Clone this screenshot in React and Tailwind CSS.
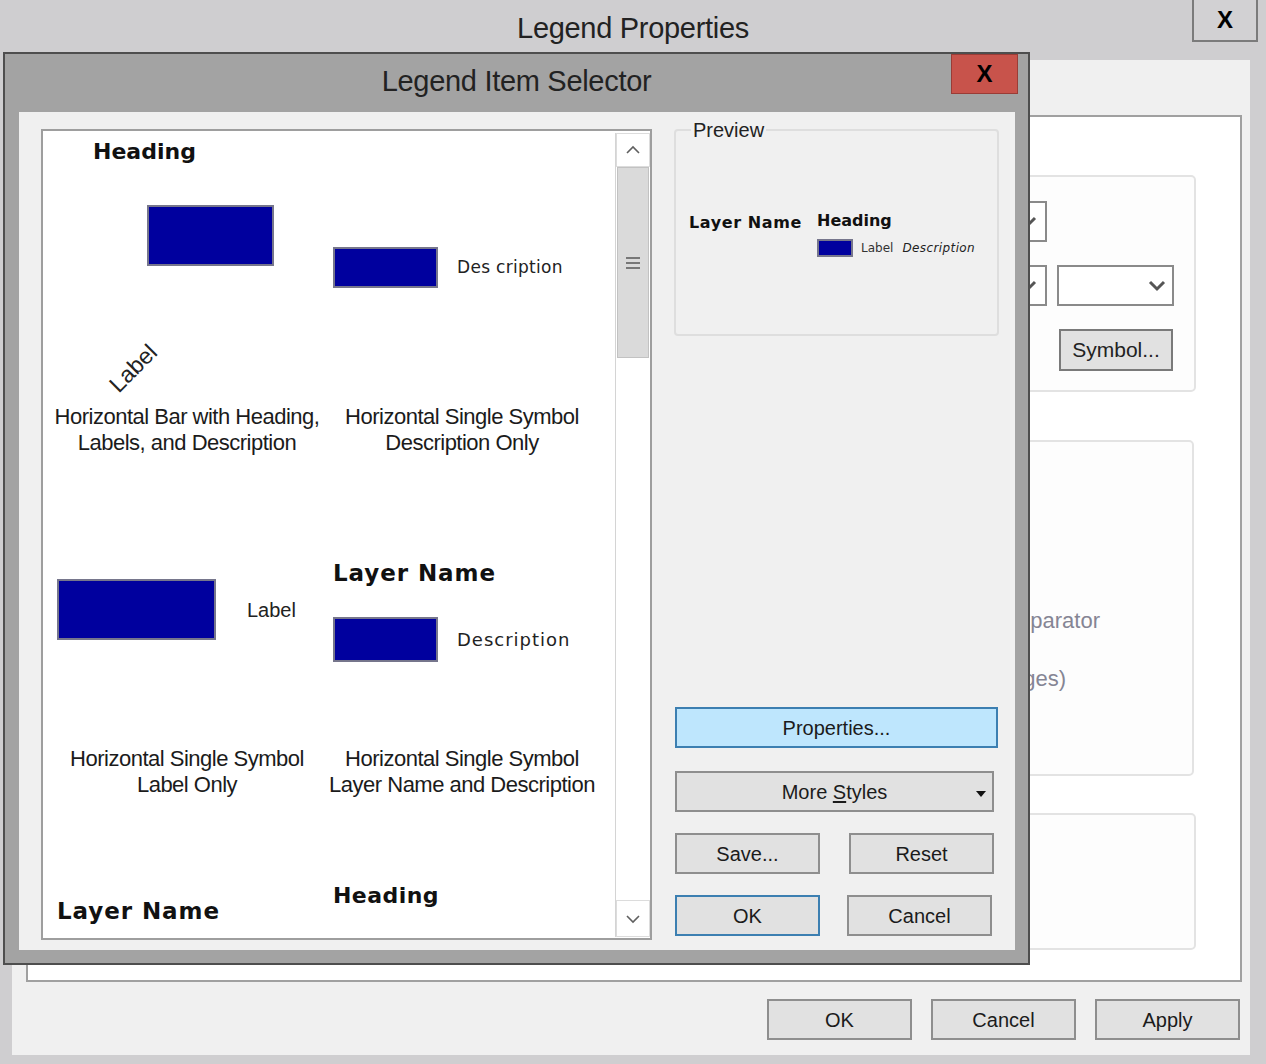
import React from "react";

const UI = "font-['Liberation_Sans',Arial,sans-serif]";
const BOLD = "font-['DejaVu_Sans',Verdana,sans-serif] font-bold";

function Btn({ children, className = "" }) {
  return (
    <div
      className={`flex items-center justify-center h-[41px] border-2 border-[#8e8e8e] bg-[#e1e1e1] text-[20px] text-[#1b1b1b] ${className}`}
    >
      {children}
    </div>
  );
}

function Swatch({ className = "" }) {
  return <div className={`bg-[#00009e] border-2 border-[#76768c] shrink-0 ${className}`} />;
}

function Chevron({ up = false }) {
  return (
    <svg width="16" height="10" viewBox="0 0 16 10">
      <polyline
        points={up ? "2,8 8,2 14,8" : "2,2 8,8 14,2"}
        fill="none"
        stroke="#606060"
        strokeWidth="1.6"
      />
    </svg>
  );
}

function ComboArrow() {
  return (
    <svg width="18" height="12" viewBox="0 0 18 12">
      <polyline points="2,2 9,9 16,2" fill="none" stroke="#555" strokeWidth="3" />
    </svg>
  );
}

function Caption({ lines }) {
  return (
    <div className={`${UI} flex flex-col items-center text-[22px] leading-[26px] tracking-[-0.5px] text-[#1b1b1b] whitespace-nowrap`}>
      {lines.map((l) => (
        <span key={l}>{l}</span>
      ))}
    </div>
  );
}

function ItemList() {
  return (
    <div className="w-[611px] h-[811px] border-2 border-[#9e9e9e] bg-white flex">
      <div className="w-[572px] overflow-hidden">
        {/* row 1 */}
        <div className="flex h-[342px]">
          <div className="w-[288px] flex flex-col">
            <div className="h-[273px] flex flex-col">
              <div className={`${BOLD} text-[22px] leading-[26px] mt-[8px] ml-[50px] text-[#111]`}>Heading</div>
              <Swatch className="w-[127px] h-[61px] mt-[40px] ml-[104px]" />
              <div className="w-[50px] h-[47px] mt-[79px] ml-[65px] flex items-center justify-center">
                <span className={`${UI} inline-block -rotate-45 text-[23px] text-[#222]`}>Label</span>
              </div>
            </div>
            <Caption lines={["Horizontal Bar with Heading,", "Labels, and Description"]} />
          </div>
          <div className="w-[262px] flex flex-col">
            <div className="h-[273px] flex flex-col">
              <div className="flex items-center gap-[19px] mt-[116px] ml-[2px]">
                <Swatch className="w-[105px] h-[41px]" />
                <span className="font-['DejaVu_Sans',sans-serif] text-[17px] tracking-[0.3px] text-[#222]">Des cription</span>
              </div>
            </div>
            <Caption lines={["Horizontal Single Symbol", "Description Only"]} />
          </div>
        </div>
        {/* row 2 */}
        <div className="flex h-[342px]">
          <div className="w-[288px] flex flex-col">
            <div className="h-[273px] flex flex-col">
              <div className="flex items-center gap-[31px] mt-[106px] ml-[14px]">
                <Swatch className="w-[159px] h-[61px]" />
                <span className={`${UI} text-[20px] text-[#222]`}>Label</span>
              </div>
            </div>
            <Caption lines={["Horizontal Single Symbol", "Label Only"]} />
          </div>
          <div className="w-[262px] flex flex-col">
            <div className="h-[273px] flex flex-col">
              <div className={`${BOLD} text-[23px] leading-[28px] tracking-[0.04em] mt-[86px] ml-[2px] text-[#111]`}>Layer Name</div>
              <div className="flex items-center gap-[19px] mt-[30px] ml-[2px]">
                <Swatch className="w-[105px] h-[45px]" />
                <span className="font-['DejaVu_Sans',sans-serif] text-[18px] tracking-[1px] text-[#222]">Description</span>
              </div>
            </div>
            <Caption lines={["Horizontal Single Symbol", "Layer Name and Description"]} />
          </div>
        </div>
        {/* row 3 */}
        <div className="flex">
          <div className="w-[288px] flex flex-col">
            <div className={`${BOLD} text-[23px] leading-[28px] tracking-[0.04em] mt-[82px] ml-[14px] text-[#111]`}>Layer Name</div>
          </div>
          <div className="w-[262px] flex flex-col">
            <div className={`${BOLD} text-[22px] leading-[28px] tracking-[0.02em] mt-[67px] ml-[2px] text-[#111]`}>Heading</div>
          </div>
        </div>
      </div>
      {/* scrollbar */}
      <div className="w-[35px] flex flex-col border-l border-[#d4d4d4] mt-[2px] mb-[1px]">
        <div className="h-[34px] flex items-center justify-center bg-white border border-[#dcdcdc]">
          <Chevron up />
        </div>
        <div className="h-[191px] mx-[1px] bg-[#dadada] border border-[#c2c2c2] flex items-center justify-center">
          <svg width="14" height="14" viewBox="0 0 14 14">
            <line x1="0" y1="2" x2="14" y2="2" stroke="#777" strokeWidth="2" />
            <line x1="0" y1="7" x2="14" y2="7" stroke="#777" strokeWidth="2" />
            <line x1="0" y1="12" x2="14" y2="12" stroke="#777" strokeWidth="2" />
          </svg>
        </div>
        <div className="flex-1 bg-white" />
        <div className="h-[37px] flex items-center justify-center bg-white border border-[#dcdcdc]">
          <Chevron />
        </div>
      </div>
    </div>
  );
}

function ItemSelector() {
  return (
    <div className="absolute left-[3px] top-[52px] w-[1027px] h-[913px] border-2 border-[#4e4e4e] bg-[#a3a3a3] flex flex-col">
      <div className="h-[58px] flex items-center justify-center relative">
        <span className={`${UI} text-[29px] text-[#222] tracking-[-0.3px] mt-[-2px]`}>Legend Item Selector</span>
        <div className="absolute top-0 right-[10px] w-[67px] h-[40px] bg-[#c8534b] border border-[#9a3c36] flex items-center justify-center">
          <span className={`${UI} font-bold text-[24px] leading-none text-black`}>X</span>
        </div>
      </div>
      <div className="ml-[14px] mr-[13px] h-[838px] bg-[#f0f0f0] flex pl-[22px] pt-[17px]">
        <ItemList />
        <div className="ml-[22px] w-[325px] flex flex-col">
          <fieldset className="h-[218px] -mt-[11px] border-2 border-[#dedede] rounded-[4px]">
            <legend className={`${UI} ml-[15px] px-[2px] text-[20px] leading-[24px] text-[#222]`}>Preview</legend>
            <div className="flex items-start pl-[13px] mt-[71px]">
              <div className={`${BOLD} w-[128px] text-[16px] leading-[20px] tracking-[0.6px] text-[#111]`}>Layer Name</div>
              <div className="flex flex-col">
                <div className={`${BOLD} text-[16px] leading-[20px] -mt-[2px] text-[#111]`}>Heading</div>
                <div className="flex items-center mt-[8px]">
                  <Swatch className="w-[36px] h-[18px]" />
                  <span className="font-['DejaVu_Sans',sans-serif] text-[12px] ml-[8px] text-[#333]">Label</span>
                  <span className="font-['DejaVu_Sans',sans-serif] italic text-[12px] ml-[9px] tracking-[0.4px] text-[#222]">Description</span>
                </div>
              </div>
            </div>
          </fieldset>
          <Btn className={`${UI} w-[323px] ml-[1px] mt-[371px] !bg-[#bee6fd] !border-[#3c7fb1]`}>Properties...</Btn>
          <Btn className={`${UI} w-[319px] ml-[1px] mt-[23px] relative`}>
            <span>
              More <span className="underline underline-offset-2">S</span>tyles
            </span>
            <svg className="absolute right-[6px] top-[18px]" width="10" height="6" viewBox="0 0 10 6">
              <polygon points="0,0 10,0 5,6" fill="#111" />
            </svg>
          </Btn>
          <div className="flex mt-[21px] ml-[1px] gap-[29px]">
            <Btn className={`${UI} w-[145px]`}>Save...</Btn>
            <Btn className={`${UI} w-[145px]`}>Reset</Btn>
          </div>
          <div className="flex mt-[21px] ml-[1px] gap-[27px]">
            <Btn className={`${UI} w-[145px] !border-[#3c7fb1]`}>OK</Btn>
            <Btn className={`${UI} w-[145px]`}>Cancel</Btn>
          </div>
        </div>
      </div>
    </div>
  );
}

export default function App() {
  return (
    <div className={`${UI} relative w-[1266px] h-[1064px] bg-[#cfced0] overflow-hidden`}>
      {/* Legend Properties window */}
      <div className="h-[60px] flex items-center justify-center relative">
        <span className="text-[29px] text-[#222] tracking-[-0.3px] -mt-[2px]">Legend Properties</span>
        <div className="absolute top-0 right-[8px] w-[66px] h-[42px] border-2 border-[#7b7b7b] border-t-0 bg-[#d2d1d3] flex items-center justify-center">
          <span className="font-bold text-[24px] leading-none text-black">X</span>
        </div>
      </div>
      <div className="ml-[12px] w-[1238px] h-[995px] bg-[#f0f0f0] flex flex-col">
        <div className="ml-[14px] mt-[55px] w-[1216px] h-[867px] bg-white border-2 border-[#a0a0a0] flex flex-col items-end pr-[44px] pt-[58px]">
          <div className="w-[1100px] h-[217px] border-2 border-[#e3e3e3] rounded-[5px] bg-[#fdfdfd] flex flex-col items-end pr-[20px] pt-[24px]">
            <div className="flex">
              <div className="w-[200px] h-[41px] border-2 border-[#8a8a8a] bg-white flex items-center justify-end pr-[8px]">
                <ComboArrow />
              </div>
              <div className="w-[127px]" />
            </div>
            <div className="flex gap-[10px] mt-[23px]">
              <div className="w-[200px] h-[41px] border-2 border-[#8a8a8a] bg-white flex items-center justify-end pr-[8px]">
                <ComboArrow />
              </div>
              <div className="w-[117px] h-[41px] border-2 border-[#8a8a8a] bg-white flex items-center justify-end pr-[6px]">
                <ComboArrow />
              </div>
            </div>
            <div className="mt-[23px] mr-[1px] w-[114px] h-[42px] border-2 border-[#7a7a7a] bg-[#e1e1e1] flex items-center justify-center text-[21px] text-[#222]">
              Symbol...
            </div>
          </div>
          <div className="w-[1098px] h-[336px] mr-[2px] mt-[48px] border-2 border-[#e3e3e3] rounded-[5px] bg-[#fdfdfd] flex flex-col items-end pt-[167px] pr-[92px]">
            <div className="text-[22px] leading-[24px] text-[#858594]">Insert separator</div>
            <div className="text-[22px] leading-[24px] text-[#858594] mt-[34px] mr-[34px]">(all pages)</div>
          </div>
          <div className="w-[1100px] h-[137px] mt-[37px] border-2 border-[#e3e3e3] rounded-[5px] bg-[#fdfdfd]" />
        </div>
        <div className="flex justify-end gap-[19px] pr-[10px] mt-[17px]">
          <Btn className="w-[145px]">OK</Btn>
          <Btn className="w-[145px]">Cancel</Btn>
          <Btn className="w-[145px]">Apply</Btn>
        </div>
      </div>
      <ItemSelector />
    </div>
  );
}
